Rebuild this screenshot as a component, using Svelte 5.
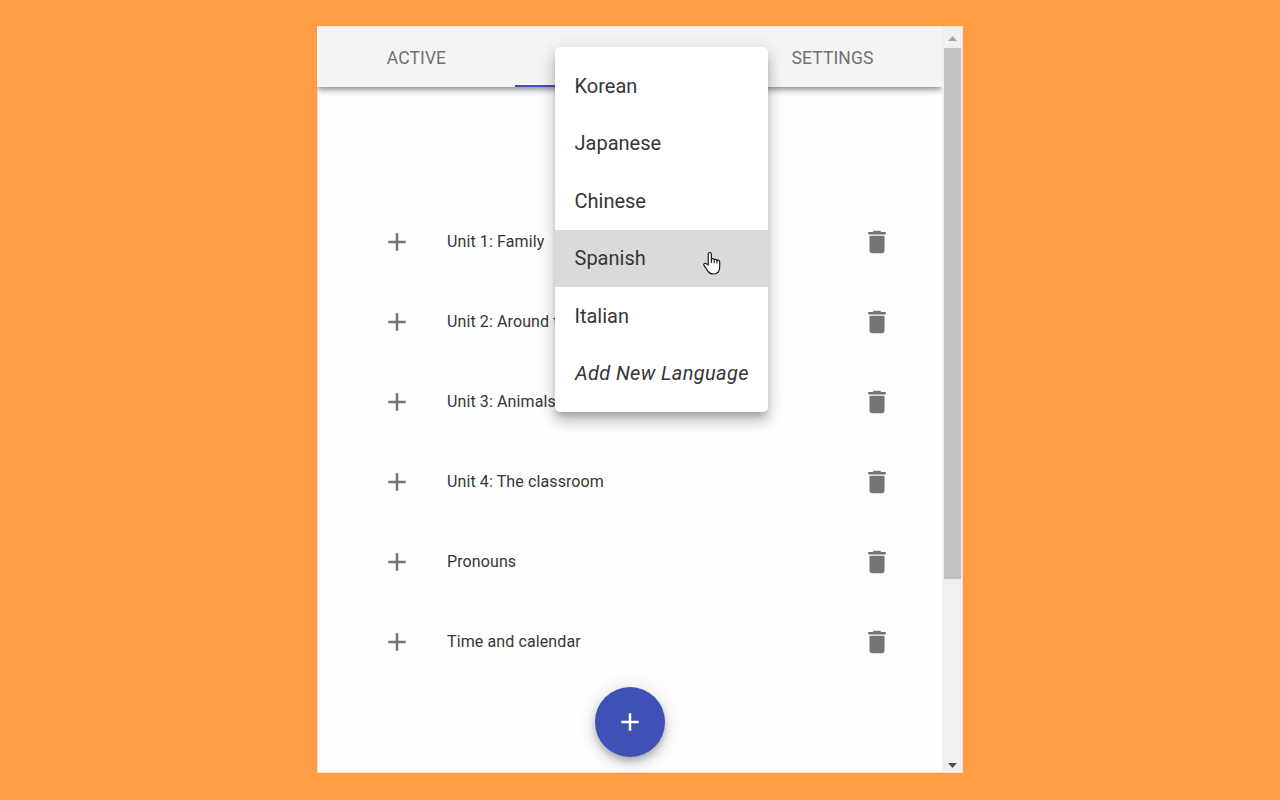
<script>
  const units = ['Unit 1: Family', 'Unit 2: Around t', 'Unit 3: Animals', 'Unit 4: The classroom', 'Pronouns', 'Time and calendar'];
  const languages = ['Korean', 'Japanese', 'Chinese', 'Spanish', 'Italian'];
  const plus = 'M19 13h-6v6h-2v-6H5v-2h6V5h2v6h6v2z';
</script>

<div class="stage">
  <div class="window">
    <main class="content">
      <nav class="tabs">
        <div class="tab first"><span>ACTIVE</span></div>
        <div class="tab selected"></div>
        <div class="tab last"><span>SETTINGS</span></div>
      </nav>
      <ul class="units">
        {#each units as unit}
          <li>
            <svg class="icon" viewBox="0 0 24 24"><path d={plus} /></svg>
            <span class="name">{unit}</span>
            <svg class="icon" viewBox="0 0 24 24"><path d="M6 19c0 1.1.9 2 2 2h8c1.1 0 2-.9 2-2V7H6v12zM19 4h-3.5l-1-1h-5l-1 1H5v2h14V4z" /></svg>
          </li>
        {/each}
      </ul>
      <button class="fab" aria-label="Add"><svg class="icon" viewBox="0 0 24 24"><path d={plus} /></svg></button>
    </main>
    <div class="scrollbar">
      <svg class="arrow up" viewBox="0 0 9 5"><path d="M0 5 4.5 0 9 5z" /></svg>
      <div class="thumb"></div>
      <svg class="arrow down" viewBox="0 0 9 5"><path d="M0 0h9L4.5 5z" /></svg>
    </div>
  </div>

  <div class="menu">
    {#each languages as language}
      <div class="item" class:hovered={language === 'Spanish'}>{language}</div>
    {/each}
    <div class="item add">Add New Language</div>
  </div>

  <svg class="cursor" viewBox="0 0 18 24">
    <path d="M5.2 14V3c0-2 3.2-2 3.2 0v5.2c.7-1 2.6-.7 2.8.5.8-.8 2.5-.4 2.7.8 1.2-.8 2.8 0 2.8 1.6V16c0 4-2.2 7-6.5 7-3.4 0-4.8-1.5-6.3-4.4L.9 14.2c-.7-1.6 1.2-2.6 2.5-1.4z" fill="#fff" stroke="#181824" stroke-width="1.2" stroke-linejoin="round" />
    <path d="M8.4 8v4M11.2 8.7v3.6M13.9 9.5v3" fill="none" stroke="#181824" stroke-width="1.1" />
  </svg>
</div>

<style>
  :global(body) { margin: 0; background: #ff9d47; }
  .stage {
    position: relative;
    box-sizing: border-box;
    width: 1280px;
    height: 800px;
    padding: 26px 317px 27px;
    overflow: hidden;
    background: #ff9d47;
    font-family: Roboto, sans-serif;
    color: #363636;
  }
  .window {
    display: flex;
    width: 646px;
    height: 747px;
    background: #fefefe;
    box-shadow: inset 0 0 0 1px #ffdfc0;
  }
  .content { flex: none; width: 625px; overflow: hidden; }
  .tabs {
    display: flex;
    height: 61px;
    background: #f4f4f4;
    box-shadow: 0 2.5px 5px -1px rgba(0, 0, 0, 0.3), 0 4px 6px rgba(0, 0, 0, 0.14), 0 1px 10px rgba(0, 0, 0, 0.12), inset 0 1px #ffe9d5;
    clip-path: inset(0 0 -20px 0);
  }
  .tab {
    display: flex;
    align-items: center;
    justify-content: center;
    box-sizing: border-box;
    padding: 3px 0 0 1px;
    font-size: 17.5px;
    letter-spacing: 0.1px;
    color: #707070;
  }
  .first { width: 198px; }
  .selected { width: 207px; border-bottom: 2px solid #3f51b5; }
  .last { width: 220px; }
  .units { list-style: none; margin: 0; padding: 115px 50px 0 65px; }
  li { display: flex; align-items: center; height: 80px; }
  .icon { flex: none; width: 30px; height: 30px; fill: #757575; }
  .name { flex: 1; padding: 0 0 2px 35px; font-size: 16px; letter-spacing: 0.11px; }
  .fab {
    display: flex;
    align-items: center;
    justify-content: center;
    width: 70px;
    height: 70px;
    margin: 5px 0 0 278px;
    padding: 0;
    border: 0;
    border-radius: 50%;
    background: #3f51b5;
    box-shadow: 0 4px 6px -1px rgba(0, 0, 0, 0.2), 0 7px 12px rgba(0, 0, 0, 0.14), 0 1px 22px rgba(0, 0, 0, 0.12);
  }
  .fab .icon { fill: #fff; }
  .scrollbar {
    display: flex;
    flex-direction: column;
    align-items: center;
    box-sizing: border-box;
    width: 21px;
    padding: 9px 0 4px;
    background: #f0f0f0;
    border: solid #ffdfc0;
    border-width: 1px 1px 1px 0;
  }
  .arrow { width: 9px; height: 5px; fill: #a3a3a3; }
  .thumb { width: 17px; height: 531px; margin: 7px 0 0 1px; background: #c1c1c1; }
  .down { margin-top: auto; fill: #505050; }
  .menu {
    position: absolute;
    left: 555px;
    top: 47px;
    width: 213px;
    box-sizing: border-box;
    padding: 10px 0;
    border-radius: 5px;
    background: #fff;
    box-shadow: 0 6px 6px -3px rgba(0, 0, 0, 0.2), 0 10px 12px 1px rgba(0, 0, 0, 0.14), 0 4px 17px 2px rgba(0, 0, 0, 0.12);
  }
  .item {
    height: 57.5px;
    padding-left: 19.5px;
    font-size: 20px;
    line-height: 57px;
    letter-spacing: 0;
    white-space: nowrap;
  }
  .item:nth-child(odd) { line-height: 58px; }
  .hovered { background: #dadada; }
  .add { padding-left: 20px; font-style: italic; letter-spacing: 0.36px; }
  .cursor { position: absolute; left: 703px; top: 251px; width: 18px; height: 24px; }
</style>
